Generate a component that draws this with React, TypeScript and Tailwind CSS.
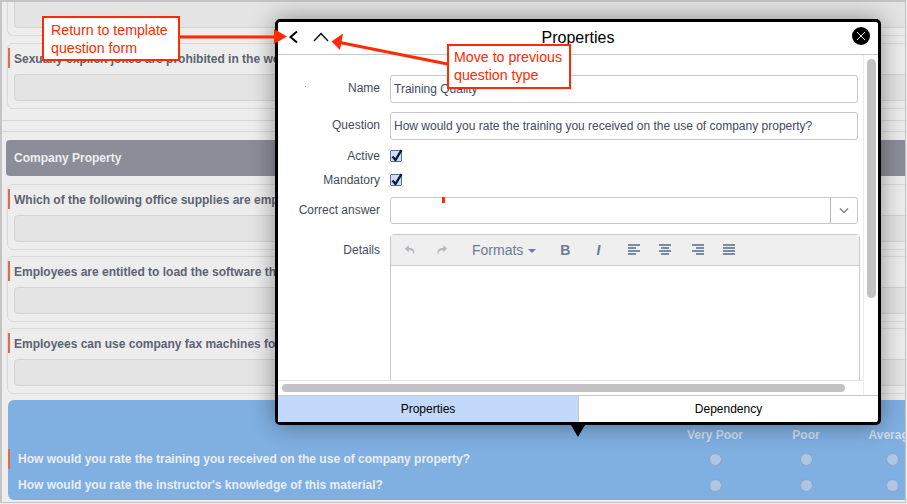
import { FC, ReactNode } from "react";

const sans = "font-['Liberation_Sans',Arial,sans-serif]";

const QuestionCard: FC<{ text: string; mt?: string }> = ({ text, mt = "mt-[6px]" }) => (
  <div className={`relative ${mt} -mr-[12px] h-[66px] rounded-[6px] border border-[#d9d9d9] pl-[6px] pr-[6px] pt-[4px]`}>
    <div className="border-l-[2px] border-[#e2694f] -ml-[6px] h-[20px] pl-[4px] text-[12px] leading-[22px] font-bold text-[#5d6270] whitespace-nowrap">
      {text}
    </div>
    <div className="mt-[6px] h-[27px] rounded-[4px] border border-[#d3d3d3] bg-[#e4e4e4]" />
  </div>
);

const Radio: FC = () => (
  <div className="h-[13px] w-[13px] rounded-full border border-[#8aa5c9] bg-[#aec6e4]" />
);

const RatingRow: FC<{ text: string; mark?: boolean }> = ({ text, mark }) => (
  <div className="flex h-[26px] items-center">
    <div className={`h-[20px] w-[650px] shrink-0 whitespace-nowrap border-l-[2px] pl-[8px] text-[12px] leading-[20px] font-bold text-[#e8eef6] ${mark ? "border-[#e2694f]" : "border-transparent"}`}>
      {text}
    </div>
    <div className="flex w-[114px] shrink-0 justify-center"><Radio /></div>
    <div className="flex w-[68px] shrink-0 justify-center"><Radio /></div>
    <div className="flex w-[104px] shrink-0 justify-center"><Radio /></div>
  </div>
);

const FormRow: FC<{ label: string; children: ReactNode; cls?: string; labelCls?: string }> = ({ label, children, cls = "", labelCls = "" }) => (
  <div className={`flex ${cls}`}>
    <div className={`w-[102px] shrink-0 text-right text-[12px] leading-[26px] text-[#444a58] ${labelCls}`}>{label}</div>
    <div className="ml-[10px] flex-1">{children}</div>
  </div>
);

const Check: FC = () => (
  <div className="relative h-[12px] w-[12px] rounded-[2px] border border-[#5a6f9a] bg-[#cddcf5]">
    <svg className="absolute -left-[1px] -top-[3px]" width="15" height="16" viewBox="0 0 15 16">
      <path d="M2.5 8.5L5.5 12L11.5 2" fill="none" stroke="#0d1b3a" strokeWidth="2.4" />
    </svg>
  </div>
);

const Tool: FC<{ x: string; children: ReactNode }> = ({ x, children }) => (
  <div className={`flex h-[16px] w-[16px] items-center justify-center ${x}`}>{children}</div>
);

const AlignIcon: FC<{ lines: [number, number][] }> = ({ lines }) => (
  <svg width="12" height="12" viewBox="0 0 12 12">
    {lines.map(([x, w], i) => (
      <rect key={i} x={x} y={i * 3} width={w} height="2" fill="#7d8aa3" />
    ))}
  </svg>
);

export default function App() {
  return (
    <div className={`relative h-[504px] w-[907px] overflow-hidden bg-[#ededed] ${sans}`}>
      {/* page behind the dialog */}
      <div className="h-[503px] w-[906px] overflow-hidden border-x border-l-[2px] border-y border-t-[2px] border-[#c4c4c4] pl-[5px]">
        <div className="-mr-[12px] h-[34px] rounded-b-[6px] border border-t-0 border-[#d9d9d9] px-[6px]">
          <div className="h-[26px] rounded-b-[4px] border border-t-0 border-[#d3d3d3] bg-[#e4e4e4]" />
        </div>
        <QuestionCard mt="mt-[7px]" text="Sexually explicit jokes are prohibited in the workplace." />
        <div className="mt-[11px] -ml-[5px] h-[12px] border-y border-[#d6d6d6]" />
        <div className="mt-[8px] -ml-[1px] -mr-[12px] flex h-[36px] items-center rounded-[4px] bg-[#8b8e99] pl-[8px] text-[12px] font-bold text-[#eceef1]">
          Company Property
        </div>
        <QuestionCard mt="mt-[8px]" text="Which of the following office supplies are employees allowed to use?" />
        <QuestionCard text="Employees are entitled to load the software they wish." />
        <QuestionCard text="Employees can use company fax machines for personal use." />
        <div className="mt-[6px] ml-[1px] -mr-[40px] h-[100px] rounded-[6px] bg-[#80afe2] pt-[24px]">
          <div className="flex h-[22px] items-center text-[12px] font-bold text-[#cfdbeb]">
            <div className="w-[650px] shrink-0" />
            <div className="w-[114px] shrink-0 text-center">Very Poor</div>
            <div className="w-[68px] shrink-0 text-center">Poor</div>
            <div className="w-[104px] shrink-0 text-center">Average</div>
          </div>
          <RatingRow mark text="How would you rate the training you received on the use of company property?" />
          <RatingRow text="How would you rate the instructor's knowledge of this material?" />
        </div>
      </div>

      {/* dialog */}
      <div className="absolute left-[275px] top-[19px] flex h-[406px] w-[606px] flex-col rounded-[5px] border-[3px] border-black bg-white shadow-[0_0_24px_rgba(0,0,0,0.4)]">
        <div className="relative flex h-[33px] shrink-0 items-center justify-center border-b border-[#c8c8c8] text-[16px] text-black">
          Properties
          <svg className="absolute left-[9px] top-[7px]" width="12" height="16" viewBox="0 0 12 16">
            <path d="M10 2.5L3.5 8L10 13.5" fill="none" stroke="#000" strokeWidth="2" />
          </svg>
          <svg className="absolute left-[35px] top-[10px]" width="16" height="10" viewBox="0 0 16 10">
            <path d="M1 9L8 1.5L15 9" fill="none" stroke="#000" strokeWidth="1.3" />
          </svg>
          <div className="absolute right-[8px] top-[5px] flex h-[18px] w-[18px] items-center justify-center rounded-full bg-black">
            <svg width="10" height="10" viewBox="0 0 10 10">
              <path d="M1 1L9 9M9 1L1 9" stroke="#fff" strokeWidth="0.9" />
            </svg>
          </div>
        </div>

        <div className="relative flex min-h-0 flex-1 overflow-hidden">
          <div className="w-[585px] shrink-0 overflow-hidden pt-[20px] text-[12px] text-[#444a58]">
            <FormRow label="Name" cls="h-[28px]">
              <div className="flex h-[28px] w-[468px] items-center rounded-[3px] border border-[#c8c8c8] pl-[3px] text-[#444a58]">Training Quality</div>
            </FormRow>
            <FormRow label="Question" cls="mt-[9px] h-[28px]">
              <div className="flex h-[28px] w-[468px] items-center whitespace-nowrap rounded-[3px] border border-[#c8c8c8] pl-[3px] text-[#444a58]">
                How would you rate the training you received on the use of company property?
              </div>
            </FormRow>
            <FormRow label="Active" cls="mt-[4px] h-[24px] items-center">
              <Check />
            </FormRow>
            <FormRow label="Mandatory" cls="h-[24px] items-center">
              <Check />
            </FormRow>
            <FormRow label="Correct answer" cls="mt-[5px] h-[27px]">
              <div className="flex h-[27px] w-[468px] rounded-[3px] border border-[#c8c8c8]">
                <div className="flex-1" />
                <div className="flex w-[27px] items-center justify-center border-l border-[#b5b5b5]">
                  <svg width="10" height="7" viewBox="0 0 10 7">
                    <path d="M1 1.5L5 5.5L9 1.5" fill="none" stroke="#6d7486" strokeWidth="1.1" />
                  </svg>
                </div>
              </div>
            </FormRow>
            <FormRow label="Details" cls="mt-[10px]" labelCls="pt-[3px]">
              <div className="h-[160px] w-[470px] rounded-t-[4px] border border-[#c8c8c8]">
                <div className="flex h-[31px] items-center border-b border-[#c8c8c8] bg-[#efefef] pl-[11px] text-[#6d7a94]">
                  <Tool x="">
                    <svg width="14" height="14" viewBox="0 0 12 12"><path d="M5 2L1.5 5L5 8V6C7.5 6 9 7 9.5 10C10.5 6.5 9 4 5 4Z" fill="#b4b8c1" /></svg>
                  </Tool>
                  <Tool x="ml-[16px]">
                    <svg width="14" height="14" viewBox="0 0 12 12"><path d="M7 2L10.5 5L7 8V6C4.5 6 3 7 2.5 10C1.5 6.5 3 4 7 4Z" fill="#b4b8c1" /></svg>
                  </Tool>
                  <div className="ml-[22px] flex items-center pt-[1px] text-[14px]">
                    Formats
                    <span className="ml-[5px] mt-[1px] h-0 w-0 border-x-[4px] border-t-[4px] border-x-transparent border-t-[#6d7a94]" />
                  </div>
                  <Tool x="ml-[21px]"><span className="text-[14px] font-bold">B</span></Tool>
                  <Tool x="ml-[17px]"><span className="text-[14px] italic font-bold">I</span></Tool>
                  <Tool x="ml-[20px]"><AlignIcon lines={[[0, 12], [0, 8], [0, 12], [0, 8]]} /></Tool>
                  <Tool x="ml-[15px]"><AlignIcon lines={[[0, 12], [2, 8], [0, 12], [2, 8]]} /></Tool>
                  <Tool x="ml-[17px]"><AlignIcon lines={[[0, 12], [4, 8], [0, 12], [4, 8]]} /></Tool>
                  <Tool x="ml-[15px]"><AlignIcon lines={[[0, 12], [0, 12], [0, 12], [0, 12]]} /></Tool>
                </div>
              </div>
            </FormRow>
          </div>
          <div className="flex-1 border-l border-[#ececec] pl-[3px] pt-[4px]">
            <div className="h-[239px] w-[9px] rounded-[5px] bg-[#c2c2c2]" />
          </div>
          <div className="absolute bottom-0 left-0 flex h-[15px] w-[585px] items-center border-t border-[#e2e2e2] bg-white pl-[4px]">
            <div className="h-[8px] w-[563px] rounded-[4px] bg-[#c2c2c2]" />
          </div>
        </div>

        <div className="flex h-[27px] shrink-0 border-t border-[#c8c8c8] text-[12px] text-black">
          <div className="flex w-[301px] items-center justify-center border-r border-[#c8c8c8] bg-[#c2d9fb]">Properties</div>
          <div className="flex flex-1 items-center justify-center">Dependency</div>
        </div>
        <div className="absolute left-[293px] top-[403px] h-0 w-0 border-x-[7px] border-t-[12px] border-x-transparent border-t-black" />
      </div>

      {/* annotations */}
      <svg className="absolute left-0 top-0" width="907" height="504" viewBox="0 0 907 504">
        <path d="M178 37H276" stroke="#ff2a00" strokeWidth="3" />
        <path d="M287 36.5L274 29V44Z" fill="#ff2a00" />
        <path d="M450 64.5L340 42.5" stroke="#ff2a00" strokeWidth="3" />
        <path d="M331.5 41.5L343 33.5L340 50Z" fill="#ff2a00" />
        <rect x="442" y="197" width="3" height="6" fill="#ff2a00" />
        <rect x="305" y="86" width="1" height="1" fill="#ff6a50" />
      </svg>
      <div className="absolute left-[42px] top-[16px] h-[45px] w-[138px] border-[2px] border-[#ff2a00] bg-white pl-[7px] pt-[4px] text-[14.2px] leading-[17.5px] text-[#ff2a00]">
        Return to template
        <br />
        question form
      </div>
      <div className="absolute left-[447px] top-[44px] h-[45px] w-[124px] border-[2px] border-[#ff2a00] bg-white pl-[5px] pt-[2px] text-[14.2px] leading-[18px] text-[#ff2a00]">
        Move to previous
        <br />
        question type
      </div>
    </div>
  );
}
